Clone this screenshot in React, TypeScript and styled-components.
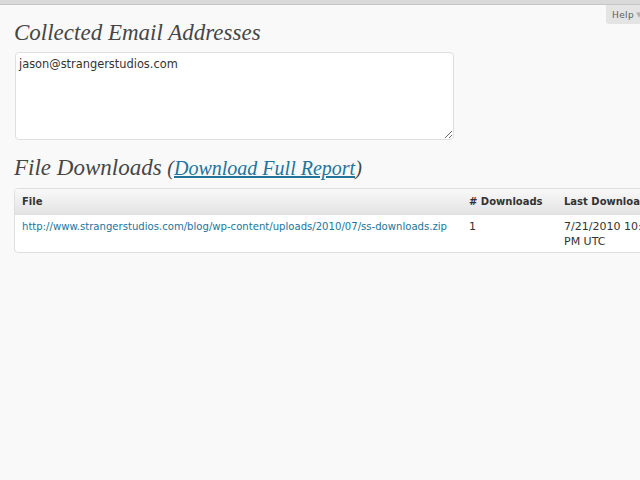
import React from "react";
import styled, { createGlobalStyle } from "styled-components";

const Global = createGlobalStyle`
  html, body { margin: 0; padding: 0; background: #f9f9f9; overflow: hidden; }
  body { font-family: "DejaVu Sans", Verdana, sans-serif; font-size: 11px; color: #333; }
`;

const Page = styled.div`
  position: relative;
  width: 640px;
  height: 480px;
  overflow: hidden;
  background: #f9f9f9;
`;

const TopBar = styled.div`
  height: 4px;
  background: #d9d9d9;
  border-bottom: 1px solid #c6c6c6;
`;

const HelpTab = styled.div`
  position: absolute;
  top: 5px;
  left: 606px;
  width: 34px;
  height: 19px;
  background: #e4e4e4;
  border-bottom-left-radius: 3px;
  display: flex;
  align-items: center;
  padding-left: 6px;
  box-sizing: border-box;
  font-family: "DejaVu Sans", sans-serif;
  font-size: 9px;
  letter-spacing: 0.4px;
  color: #606060;
  gap: 2px;
  white-space: nowrap;
  overflow: hidden;
`;

const Arrow = styled.span`
  color: #b0b0b0;
  font-size: 7px;
`;

const Content = styled.div`
  padding: 0 0 0 14px;
  width: 720px;
`;

const Heading = styled.h2`
  margin: 0;
  font-family: "Liberation Serif", "Times New Roman", serif;
  font-style: italic;
  font-weight: normal;
  font-size: 23px;
  line-height: 32px;
  color: #464646;
  padding: 12px 0 3px;
  white-space: nowrap;
`;

const ReportLink = styled.a`
  color: #21759b;
  text-decoration: underline;
`;

const Paren = styled.span`
  font-size: 20px;
`;

const Area = styled.textarea`
  display: block;
  width: 439px;
  height: 88px;
  margin: 0 0 0 1px;
  padding: 3px 3px;
  box-sizing: border-box;
  background: #fff;
  border: 1px solid #dfdfdf;
  border-radius: 4px;
  font-family: "DejaVu Sans", Verdana, sans-serif;
  font-size: 11.4px;
  line-height: 16px;
  color: #333;
  outline: none;
`;

const Table = styled.table`
  table-layout: fixed;
  border-collapse: separate;
  border-spacing: 0;
  background: #fff;
  border: 1px solid #dfdfdf;
  border-radius: 4px;
  margin-top: 1px;
  overflow: hidden;
`;

const Th = styled.th<{ $w: number }>`
  width: ${(p) => p.$w}px;
  text-align: left;
  font-family: "DejaVu Sans", Verdana, sans-serif;
  font-weight: bold;
  font-size: 10px;
  color: #333;
  padding: 5px 7px 4px;
  line-height: 16px;
  background: linear-gradient(to bottom, #f9f9f9, #e3e3e3);
  border-bottom: 1px solid #dfdfdf;
  white-space: nowrap;
`;

const Td = styled.td`
  vertical-align: top;
  padding: 4px 7px 3px;
  line-height: 15px;
  font-size: 11px;
  color: #333;
`;

const FileLink = styled.a`
  color: #21759b;
  text-decoration: none;
  font-size: 10.1px;
`;

export default function App() {
  return (
    <Page>
      <Global />
      <TopBar />
      <HelpTab>
        Help <Arrow>▼</Arrow>
      </HelpTab>
      <Content>
        <Heading>Collected Email Addresses</Heading>
        <Area defaultValue="jason@strangerstudios.com" />
        <Heading>
          File Downloads{" "}
          <Paren>
            (<ReportLink href="#">Download Full Report</ReportLink>)
          </Paren>
        </Heading>
        <Table>
          <thead>
            <tr>
              <Th $w={433}>File</Th>
              <Th $w={81}>&#35; Downloads</Th>
              <Th $w={108}>Last Download</Th>
            </tr>
          </thead>
          <tbody>
            <tr>
              <Td>
                <FileLink href="#">
                  http://www.strangerstudios.com/blog/wp-content/uploads/2010/07/ss-downloads.zip
                </FileLink>
              </Td>
              <Td>1</Td>
              <Td>7/21/2010 10:02 PM UTC</Td>
            </tr>
          </tbody>
        </Table>
      </Content>
    </Page>
  );
}
